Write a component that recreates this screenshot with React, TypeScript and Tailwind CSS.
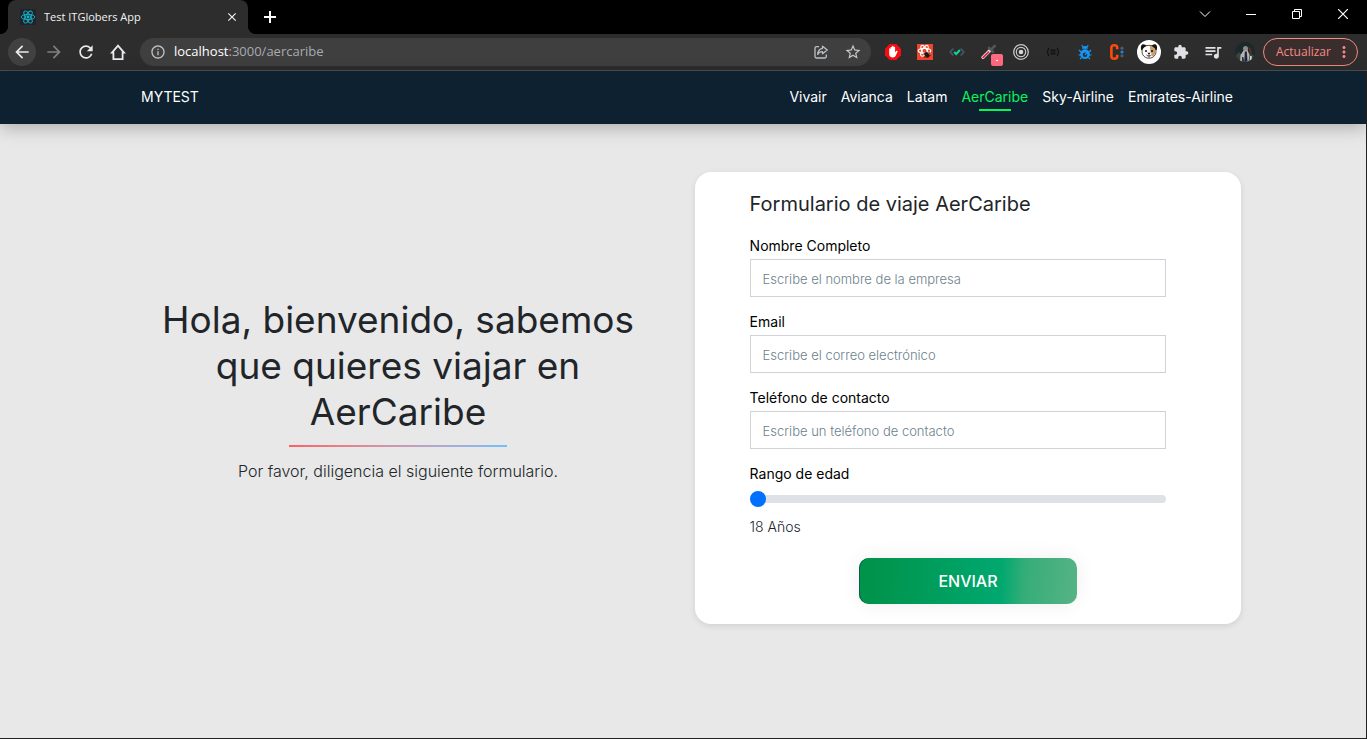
import { useState } from 'react';
import type { ReactNode } from 'react';
import {
  MdArrowBack,
  MdArrowForward,
  MdClose,
  MdExtension,
  MdInfoOutline,
  MdMoreVert,
  MdQueueMusic,
  MdRefresh,
  MdStarBorder,
} from 'react-icons/md';

function ReactLogo() {
  return (
    <svg viewBox="0 0 16 16" className="size-4 shrink-0" aria-hidden="true">
      <rect width="16" height="16" rx="1" fill="#20232a" />
      <g fill="none" stroke="#12b5cb" strokeWidth="0.9">
        <ellipse cx="8" cy="8" rx="6.8" ry="2.6" />
        <ellipse cx="8" cy="8" rx="6.8" ry="2.6" transform="rotate(60 8 8)" />
        <ellipse cx="8" cy="8" rx="6.8" ry="2.6" transform="rotate(120 8 8)" />
      </g>
      <circle cx="8" cy="8" r="1.4" fill="#12b5cb" />
    </svg>
  );
}

function HomeIcon() {
  return (
    <svg viewBox="0 0 20 20" className="size-5" fill="none" stroke="#e8eaed" strokeWidth="1.8" aria-hidden="true">
      <path d="M4 10.600H5.400V17.200h9.200v-6.600H16L10 3.700Z" strokeLinejoin="miter" />
    </svg>
  );
}

function ShareIcon() {
  return (
    <svg viewBox="0 0 16 16" className="size-4" fill="none" stroke="#bdc1c6" strokeWidth="1.3" aria-hidden="true">
      <path d="M6 2.700H3.500a1.500 1.500 0 0 0-1.500 1.500v8.300A1.500 1.500 0 0 0 3.500 14h8.300a1.500 1.500 0 0 0 1.500-1.500V10.500" />
      <path d="M9.500 2.200 14.300 6 9.500 9.800V7.700C7.300 7.700 5.700 8.500 4.700 10.400 4.900 7.300 6.600 4.700 9.500 4.300Z" strokeLinejoin="round" />
    </svg>
  );
}

function AdblockIcon() {
  return (
    <svg viewBox="0 0 16 16" className="size-4" aria-hidden="true">
      <path d="M4.700 0h6.600L16 4.700v6.600L11.300 16H4.700L0 11.300V4.700Z" fill="#f40d12" />
      <path
        d="M4.200 8.300V4.900c0-.9 1.400-.9 1.400 0V3.400c0-1 1.500-1 1.500 0v-.8c0-1 1.500-1 1.500 0v.9c0-1 1.500-1 1.500 0v5l1-1.500c.6-.7 1.800-.1 1.400.8l-1.700 3.700c-.5 1.200-1.400 2-2.900 2-2.500 0-3.700-1.300-3.700-3.200Z"
        fill="#fff"
      />
    </svg>
  );
}

function ReactBugIcon() {
  return (
    <svg viewBox="0 0 16 16" className="size-4" aria-hidden="true">
      <rect width="16" height="16" fill="#f0442c" />
      <g fill="none" stroke="#fff" strokeWidth="1.2">
        <ellipse cx="7.500" cy="6.800" rx="6.300" ry="2.500" />
        <ellipse cx="7.500" cy="6.800" rx="6" ry="2.500" transform="rotate(60 7.500 6.800)" />
        <ellipse cx="7.500" cy="6.800" rx="6" ry="2.500" transform="rotate(120 7.500 6.800)" />
      </g>
      <ellipse cx="9.800" cy="10.800" rx="2.200" ry="2.900" transform="rotate(-35 9.800 10.800)" fill="#26150f" />
      <path d="m6.300 10 6.500-1.300M7 13.300l6.700-1.800M9 7.500l2 6.500" stroke="#26150f" strokeWidth="0.8" />
    </svg>
  );
}

function CodeCheckIcon() {
  return (
    <svg viewBox="0 0 16 16" className="size-4" fill="none" strokeWidth="1.7" aria-hidden="true">
      <path d="M4.300 4.500 1.200 8l3.100 3.500M11.700 4.500 14.800 8l-3.100 3.500" stroke="#42566b" />
      <path d="m5.200 8 2 2 3.700-4" stroke="#0fd694" strokeWidth="2" />
    </svg>
  );
}

function DropperIcon() {
  return (
    <span className="relative block size-4">
      <svg viewBox="0 0 16 16" className="size-4" aria-hidden="true">
        <path d="M2 13.300 9 6.300" stroke="#e7e7ea" strokeWidth="3.2" strokeLinecap="round" />
        <path d="M2.200 13.400 7.500 8.100" stroke="#e5274a" strokeWidth="2" strokeLinecap="round" />
        <path d="m8 3.800 4 4M10 5.700l3.700-3.700" stroke="#55565a" strokeWidth="2.600" strokeLinecap="round" />
      </svg>
      <span className="absolute top-2.5 left-2.5 flex size-3 items-center justify-center rounded-xs bg-[#ff6b81]">
        <span className="h-px w-0.5 bg-white" />
      </span>
    </span>
  );
}

function TargetIcon() {
  return (
    <svg viewBox="0 0 16 16" className="size-4" fill="none" stroke="#c8c9cb" aria-hidden="true">
      <circle cx="8" cy="8" r="7.300" strokeWidth="1.3" />
      <circle cx="8" cy="8" r="4.700" strokeWidth="1.2" />
      <circle cx="8" cy="8" r="2.300" fill="#d5d6d8" stroke="none" />
    </svg>
  );
}

function BracesIcon() {
  return (
    <svg viewBox="0 0 16 16" className="size-4" fill="none" stroke="#111" strokeWidth="1.2" aria-hidden="true">
      <path d="M4.200 4.200C2.500 4.200 3.500 8 1.800 8c1.700 0 .7 3.800 2.400 3.800M11.800 4.200c1.700 0 .7 3.800 2.400 3.800-1.700 0-.7 3.800-2.400 3.800" />
      <path d="M5.500 6.200h5M5.500 8h5M5.500 9.800h5" />
    </svg>
  );
}

function BlueBugIcon() {
  return (
    <svg viewBox="0 0 16 16" className="size-4" aria-hidden="true">
      <g fill="none" stroke="#1597f5" strokeWidth="1.2">
        <path d="M6 3 4.800 1M10 3l1.200-2M4 8 2 6M12 8l2-2M4 11H1.500M12 11h2.500M4.500 13.500 3 15M11.500 13.500 13 15" />
      </g>
      <path d="M5.200 4.800a2.800 2.800 0 0 1 5.600 0Z" fill="#1597f5" />
      <ellipse cx="8" cy="10.200" rx="4.800" ry="4.900" fill="#1597f5" />
      <circle cx="8" cy="10.800" r="2.300" fill="#2d3036" />
      <path d="m8 10.800 2.500-3" stroke="#1597f5" strokeWidth="1.3" />
    </svg>
  );
}

function OrangeCIcon() {
  return (
    <svg viewBox="0 0 16 16" className="size-4" aria-hidden="true">
      <path d="M8.200 5.300V3.800C8.200 2 7.400 1.300 5.300 1.300S2.400 2 2.400 3.800v8.400c0 1.800.8 2.500 2.900 2.500s2.900-.7 2.900-2.500v-1.500" fill="none" stroke="#ff4a0c" strokeWidth="2.600" />
      <circle cx="13" cy="4.200" r="1.600" fill="#555b62" />
      <circle cx="13" cy="8" r="1.600" fill="#1588e8" />
      <circle cx="13" cy="11.800" r="1.600" fill="#555b62" />
    </svg>
  );
}

function DogIcon() {
  return (
    <svg viewBox="0 0 24 24" className="size-6" aria-hidden="true">
      <circle cx="12" cy="12" r="12" fill="#fff" />
      <path d="M6.500 6.500C9 5 15 5 17.500 6.500c1.400 2.500 2 6 .8 8-1.200 2.500-3.600 3.700-6.300 3.700s-5.100-1.200-6.300-3.700c-1.200-2-.6-5.500.8-8Z" fill="#fff" stroke="#292520" strokeWidth="0.8" />
      <path d="M12.800 6c2 0 3.500.3 4.300 1 1 2.300 1.600 5 .8 7-.6 1.200-1.400 2.200-2.300 2.800L13.300 11Z" fill="#cf9b67" />
      <path d="M4.500 10.500C3.300 7.500 4 4.500 6 4.200c1.700 0 3 1 3.500 1.800C7.500 6.800 6 8.500 4.500 10.500ZM19.500 10.500c1.200-3 .5-6-1.500-6.300-1.700 0-3 1-3.500 1.800 2 .8 3.500 2.500 5 4.500Z" fill="#15120f" />
      <circle cx="9" cy="11" r="1" fill="#111" />
      <circle cx="15" cy="11" r="1" fill="#111" />
      <path d="M10.300 12.700h3.400L12 14.500Z" fill="#111" />
      <path d="M9.500 15c1 1 2 1 2.500-.3.500 1.300 1.500 1.300 2.500.3" stroke="#111" fill="none" strokeWidth="0.8" />
      <path d="M11 16h2v1.500h-2Z" fill="#e05c64" />
    </svg>
  );
}

function AvatarIcon() {
  return (
    <svg viewBox="0 0 20 20" className="size-5" aria-hidden="true">
      <defs>
        <clipPath id="avatar-clip">
          <circle cx="10" cy="10" r="10" />
        </clipPath>
      </defs>
      <g clipPath="url(#avatar-clip)">
        <rect width="20" height="20" fill="#1c292b" />
        <path d="M0 14 4 10l3 3 5-3 8 4v6H0Z" fill="#37453c" />
        <circle cx="10.500" cy="6.500" r="2.500" fill="#8f8c8c" />
        <path d="M8.500 8.500 5.500 13l-.5 7h2.500l1-5 1 5h4l1-7-2-5Z" fill="#b4b3b7" />
        <path d="M9.800 9.500h2l.7 10.500H9.300Z" fill="#22243a" />
        <path d="m13 5 2.500 1 1.500 5-2 1Z" fill="#5c2c2b" />
        <path d="M15 14h1.700v6h-2.200Z" fill="#d6d5d8" />
        <path d="M7 15h1.300v5H7Z" fill="#30333f" />
      </g>
    </svg>
  );
}

const extensions: { name: string; icon: ReactNode }[] = [
  { name: 'Bloqueador', icon: <AdblockIcon /> },
  { name: 'React', icon: <ReactBugIcon /> },
  { name: 'Verificador', icon: <CodeCheckIcon /> },
  { name: 'Cuentagotas', icon: <DropperIcon /> },
  { name: 'Objetivo', icon: <TargetIcon /> },
  { name: 'JSON', icon: <BracesIcon /> },
  { name: 'Depurador', icon: <BlueBugIcon /> },
  { name: 'Colores', icon: <OrangeCIcon /> },
  { name: 'Perro', icon: <DogIcon /> },
  { name: 'Extensiones', icon: <MdExtension className="size-4 text-[#dfe1e5]" /> },
  { name: 'Multimedia', icon: <MdQueueMusic className="size-5 text-[#dfe1e5]" /> },
  { name: 'Perfil', icon: <AvatarIcon /> },
];

function ToolButton({ label, className = '', children }: { label: string; className?: string; children: ReactNode }) {
  return (
    <button type="button" aria-label={label} className={`flex size-7 shrink-0 items-center justify-center rounded-full ${className}`}>
      {children}
    </button>
  );
}

function TabStrip() {
  return (
    <div className="flex h-[34px] items-end justify-between bg-black pr-px">
      <div className="flex h-full items-end">
        <div className="size-2 bg-[radial-gradient(circle_at_0_0,#000_8px,#2d2d2d_8px)]" />
        <div className="flex h-full w-60 items-center gap-2 rounded-t-lg bg-[#2d2d2d] pr-2 pl-3">
          <ReactLogo />
          <span className="flex-1 truncate text-[11px] text-[#f1f3f4]">Test ITGlobers App</span>
          <button type="button" aria-label="Cerrar pestaña" className="flex size-4 items-center justify-center text-[#f1f3f4]">
            <MdClose className="size-3.5" />
          </button>
        </div>
        <div className="size-2 bg-[radial-gradient(circle_at_100%_0,#000_8px,#2d2d2d_8px)]" />
        <button type="button" aria-label="Nueva pestaña" className="flex h-full w-7 items-center justify-center text-white">
          <svg viewBox="0 0 12 12" className="size-3" stroke="currentColor" strokeWidth="2" aria-hidden="true">
            <path d="M6 0v12M0 6h12" />
          </svg>
        </button>
      </div>
      <div className="flex h-full items-start text-white">
        <button type="button" aria-label="Buscar pestañas" className="flex h-7 w-[46px] items-center justify-center">
          <svg viewBox="0 0 12 12" className="size-3" fill="none" stroke="currentColor" aria-hidden="true">
            <path d="m1 3.500 5 5 5-5" />
          </svg>
        </button>
        <button type="button" aria-label="Minimizar" className="flex h-7 w-[46px] items-center justify-center">
          <span className="h-px w-2.5 bg-white" />
        </button>
        <button type="button" aria-label="Restaurar" className="flex h-7 w-[46px] items-center justify-center">
          <svg viewBox="0 0 10 10" className="size-2.5" fill="none" stroke="currentColor" aria-hidden="true">
            <path d="M.5 2.500h7v7h-7ZM2.500 2.500v-2h7v7h-2" />
          </svg>
        </button>
        <button type="button" aria-label="Cerrar" className="flex h-7 w-[46px] items-center justify-center">
          <svg viewBox="0 0 10 10" className="size-2.5" stroke="currentColor" strokeWidth="1.2" aria-hidden="true">
            <path d="m0 0 10 10M10 0 0 10" />
          </svg>
        </button>
      </div>
    </div>
  );
}

function Toolbar() {
  return (
    <div className="flex h-[37px] items-center border-b border-[#4d4f51] bg-[#2d2d2d] pr-[9px] pl-2">
      <div className="flex gap-1">
        <ToolButton label="Atrás" className="bg-[#414141]">
          <MdArrowBack className="size-5 text-[#e8eaed]" />
        </ToolButton>
        <ToolButton label="Adelante">
          <MdArrowForward className="size-5 text-[#7d7f82]" />
        </ToolButton>
        <ToolButton label="Recargar">
          <MdRefresh className="size-5 text-[#e8eaed]" />
        </ToolButton>
        <ToolButton label="Inicio">
          <HomeIcon />
        </ToolButton>
      </div>
      <div className="mr-1.5 ml-2 flex h-7 min-w-0 flex-1 items-center rounded-full bg-[#3f3f3f] px-2.5">
        <MdInfoOutline className="size-4 shrink-0 text-[#bdc1c6]" />
        <span className="ml-2 flex-1 truncate text-[13px] text-[#a8abaf]">
          <span className="text-white">localhost</span>:3000/aercaribe
        </span>
        <div className="-mr-1.5 flex gap-1">
          <ToolButton label="Compartir">
            <ShareIcon />
          </ToolButton>
          <ToolButton label="Marcador">
            <MdStarBorder className="size-[18px] text-[#c4c7ca]" />
          </ToolButton>
        </div>
      </div>
      <div className="flex shrink-0">
        {extensions.map((item) => (
          <button key={item.name} type="button" aria-label={item.name} className="flex h-7 w-8 items-center justify-center">
            {item.icon}
          </button>
        ))}
      </div>
      <button
        type="button"
        className="ml-0.5 flex h-7 w-[95px] shrink-0 items-center justify-between rounded-full border border-[#f28b82] bg-[#3a2d2e] pr-1 pl-3 text-xs text-[#f28b82]"
      >
        Actualizar
        <MdMoreVert className="size-[18px]" />
      </button>
    </div>
  );
}

const airlines = ['Vivair', 'Avianca', 'Latam', 'AerCaribe', 'Sky-Airline', 'Emirates-Airline'];

function SiteNav() {
  return (
    <header className="relative bg-[#0d2130] shadow-[0_4px_16px_rgba(0,0,0,0.25)]">
      <nav className="mx-auto flex h-[53px] max-w-[1116px] items-center justify-between pr-px pb-px pl-4 text-sm text-white">
        <a href="#inicio">MYTEST</a>
        <ul className="flex">
          {airlines.map((name) => (
            <li key={name} className="relative px-[7px]">
              {name === 'AerCaribe' ? (
                <a href={`#${name}`} aria-current="page" className="text-[#0bf35b]">
                  {name}
                  <span className="absolute -bottom-1 left-1/2 h-0.5 w-8 -translate-x-1/2 bg-[#0bf35b]" />
                </a>
              ) : (
                <a href={`#${name}`}>{name}</a>
              )}
            </li>
          ))}
        </ul>
      </nav>
    </header>
  );
}

const fields = [
  { id: 'nombre', label: 'Nombre Completo', type: 'text', placeholder: 'Escribe el nombre de la empresa' },
  { id: 'email', label: 'Email', type: 'email', placeholder: 'Escribe el correo electrónico' },
  { id: 'telefono', label: 'Teléfono de contacto', type: 'tel', placeholder: 'Escribe un teléfono de contacto' },
];

function TravelForm() {
  const [age, setAge] = useState(18);
  return (
    <form className="rounded-2xl bg-white px-[10%] py-5 shadow-[0_2px_6px_rgba(0,0,0,0.1)]" onSubmit={(event) => event.preventDefault()}>
      <h2 className="mb-5 text-xl leading-6 text-[#212529]">Formulario de viaje AerCaribe</h2>
      <div className="mr-5 flex flex-col gap-[15px]">
        {fields.map((field) => (
          <div key={field.id} className="flex flex-col gap-[3px]">
            <label htmlFor={field.id} className="text-sm text-black">
              {field.label}
            </label>
            <input
              id={field.id}
              type={field.type}
              placeholder={field.placeholder}
              className="h-[38px] w-full border border-[#ced4da] bg-white px-3 pt-0.5 text-[13px] font-light text-[#495057] outline-none placeholder:text-[#6c7f8c]"
            />
          </div>
        ))}
        <div className="flex flex-col">
          <label htmlFor="edad" className="text-sm text-black">
            Rango de edad
          </label>
          <input
            id="edad"
            type="range"
            min={18}
            max={100}
            value={age}
            onChange={(event) => setAge(Number(event.target.value))}
            className="mt-[7px] mb-2.5 h-4 w-full appearance-none bg-transparent [&::-webkit-slider-runnable-track]:h-2 [&::-webkit-slider-runnable-track]:rounded-full [&::-webkit-slider-runnable-track]:bg-[#dee2e6] [&::-webkit-slider-thumb]:-mt-1 [&::-webkit-slider-thumb]:size-4 [&::-webkit-slider-thumb]:appearance-none [&::-webkit-slider-thumb]:rounded-full [&::-webkit-slider-thumb]:bg-[#0070ff]"
          />
          <output htmlFor="edad" className="text-sm font-light text-[#212529]">
            {age} Años
          </output>
        </div>
      </div>
      <button
        type="submit"
        className="mx-auto mt-[21px] block h-[46px] w-1/2 rounded-[10px] bg-[linear-gradient(92deg,#00934a_5%,#00a870_65%,#36ad79_76%,#56b384_100%)] text-base font-medium text-white shadow-[inset_1px_0_#0a5a50,0_0_20px_#eee]"
      >
        ENVIAR
      </button>
    </form>
  );
}

export default function App() {
  return (
    <div className="flex min-h-screen flex-col bg-[#e8e8e8] font-['Open_Sans','Noto_Sans',sans-serif]">
      <TabStrip />
      <Toolbar />
      <div className="flex flex-1 flex-col border-r border-b border-[#222] font-[Inter,sans-serif]">
        <SiteNav />
        <main className="mx-auto grid w-full max-w-[1116px] grid-cols-2 items-center gap-6 pt-12 pb-12">
          <section className="flex flex-col items-center text-center text-[#212529]">
            <h1 className="px-4 text-[37px] leading-[46px]">Hola, bienvenido, sabemos que quieres viajar en AerCaribe</h1>
            <div className="mt-2.5 mb-3 h-0.5 w-2/5 bg-gradient-to-r from-[#ff5f5f] to-[#6fbfff]" />
            <p className="mb-4 text-base font-light">Por favor, diligencia el siguiente formulario.</p>
          </section>
          <TravelForm />
        </main>
      </div>
    </div>
  );
}
